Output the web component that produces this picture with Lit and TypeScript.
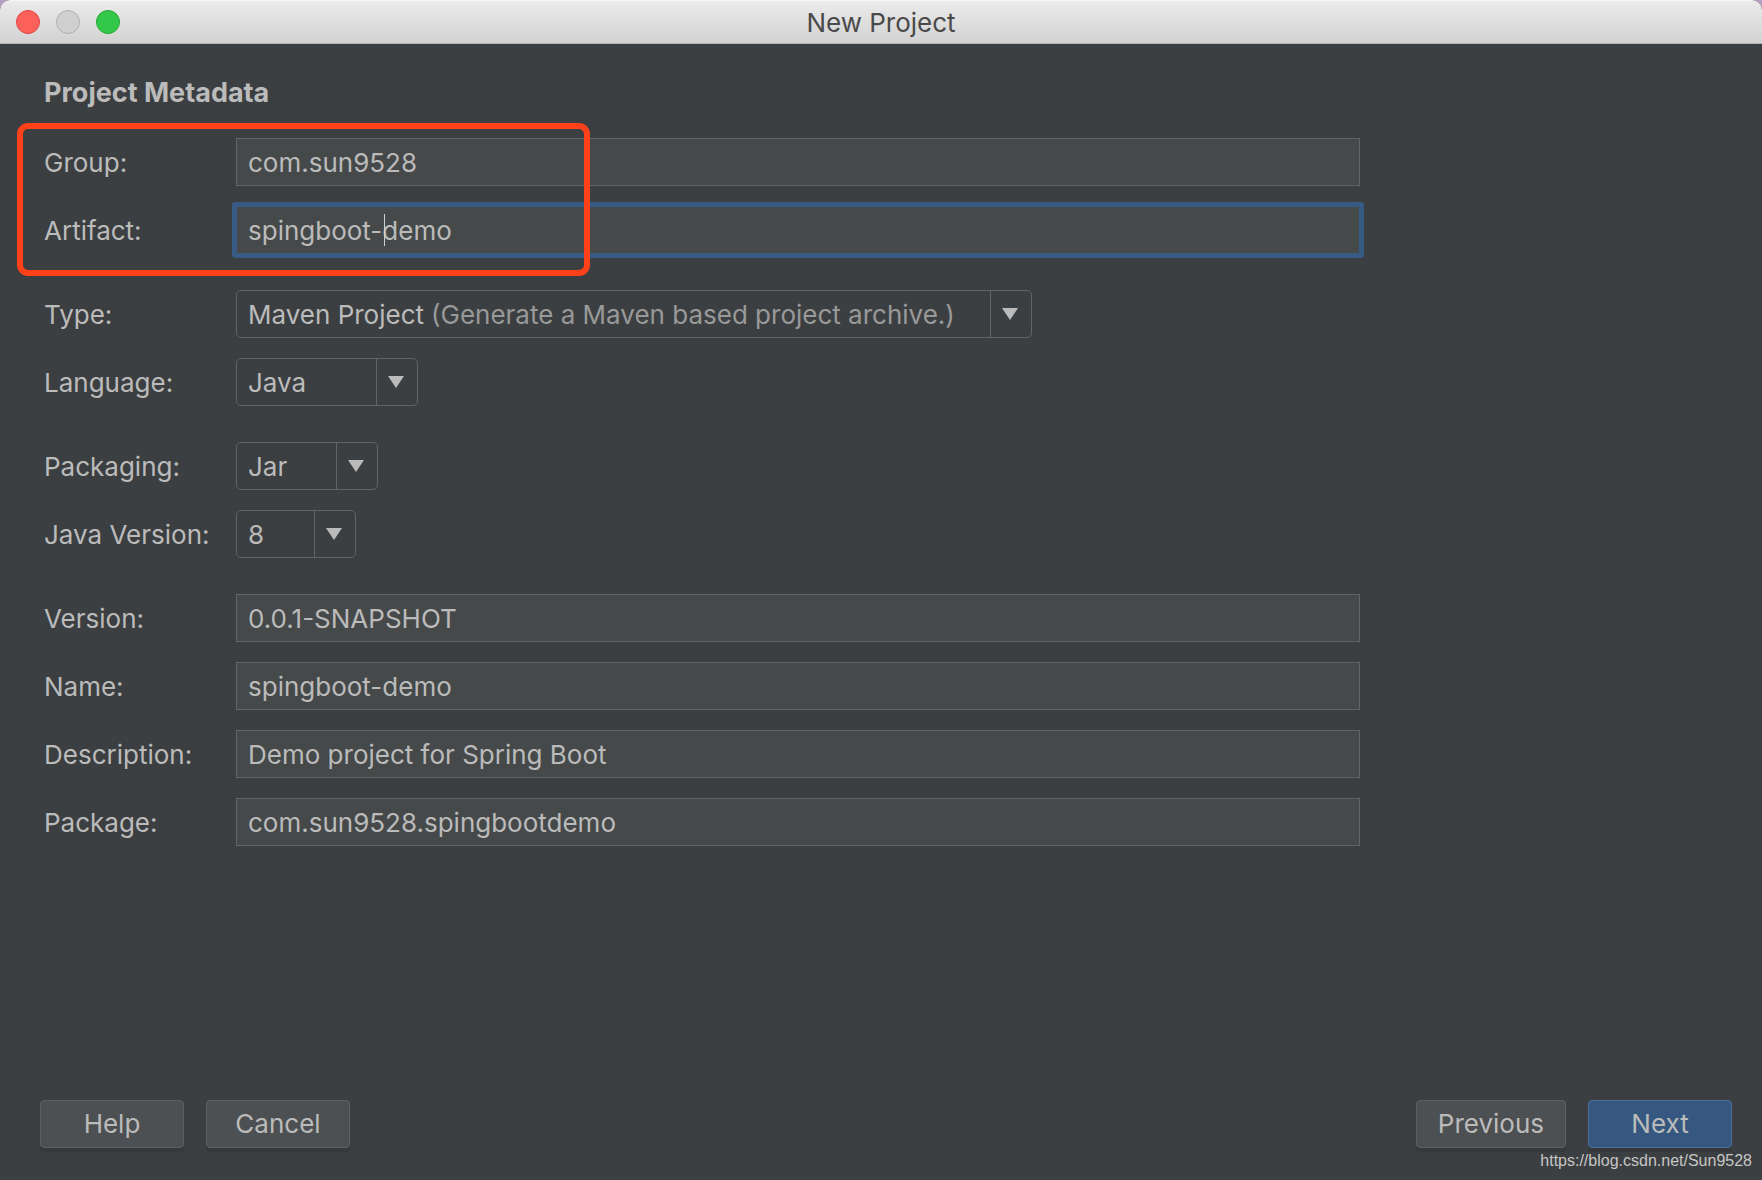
import { LitElement, html, css, nothing } from "lit";
import { customElement } from "lit/decorators.js";
import { classMap } from "lit/directives/class-map.js";

interface Field {
  id: string;
  label: string;
  value: string;
  kind: "text" | "select";
  size?: string;
  hint?: string;
  active?: boolean;
}

const groups: Field[][] = [
  [
    { id: "group", label: "Group:", value: "com.sun9528", kind: "text" },
    { id: "artifact", label: "Artifact:", value: "spingboot-demo", kind: "text", active: true },
  ],
  [
    {
      id: "type",
      label: "Type:",
      value: "Maven Project",
      kind: "select",
      size: "wide",
      hint: "(Generate a Maven based project archive.)",
    },
    { id: "language", label: "Language:", value: "Java", kind: "select", size: "medium" },
  ],
  [
    { id: "packaging", label: "Packaging:", value: "Jar", kind: "select", size: "small" },
    { id: "java-version", label: "Java Version:", value: "8", kind: "select", size: "tiny" },
  ],
  [
    { id: "version", label: "Version:", value: "0.0.1-SNAPSHOT", kind: "text" },
    { id: "name", label: "Name:", value: "spingboot-demo", kind: "text" },
    { id: "description", label: "Description:", value: "Demo project for Spring Boot", kind: "text" },
    { id: "package", label: "Package:", value: "com.sun9528.spingbootdemo", kind: "text" },
  ],
];

@customElement("app-root")
export class AppRoot extends LitElement {
  static styles = css`
    :host {
      display: block;
      background: #b79fc4;
      font-family: Inter, "Liberation Sans", sans-serif;
      font-size: 26px;
      line-height: 32px;
      color: #bbbbbb;
    }
    *,
    *::before,
    *::after {
      box-sizing: border-box;
    }
    .page {
      position: relative;
    }
    .window {
      display: flex;
      flex-direction: column;
      min-height: 100vh;
      background: #3c3f41;
      border-radius: 10px 10px 0 0;
      overflow: hidden;
    }
    .titlebar {
      display: grid;
      grid-template-columns: 1fr auto 1fr;
      align-items: center;
      height: 44px;
      padding: 0 16px;
      background: linear-gradient(#ebebeb, #d2d2d2);
      border-top: 1px solid #f6f6f6;
      border-bottom: 1px solid #b4b4b4;
    }
    .lights {
      display: flex;
      gap: 16px;
    }
    .light {
      width: 24px;
      height: 24px;
      padding: 0;
      border: 1px solid #b0b0b0;
      border-radius: 50%;
      background: #d0d0d0;
    }
    .light.close {
      background: #fc605b;
      border-color: #df4644;
    }
    .light.zoom {
      background: #34c84a;
      border-color: #24a732;
    }
    .title {
      margin: 0;
      padding-top: 2px;
      font-size: 26px;
      font-weight: 400;
      color: #4a4a4a;
    }
    .content {
      flex: 1;
      display: flex;
      flex-direction: column;
      padding: 33px 30px 32px 44px;
    }
    .heading {
      margin: 0 0 29px;
      font-size: 27px;
      font-weight: 700;
    }
    .form {
      display: flex;
      flex-direction: column;
      gap: 36px;
      max-width: 1316px;
    }
    .group {
      position: relative;
      display: flex;
      flex-direction: column;
      gap: 20px;
    }
    .row {
      display: grid;
      grid-template-columns: 192px minmax(0, 1fr);
      align-items: center;
    }
    .label {
      padding-top: 2px;
    }
    .control {
      position: relative;
      display: grid;
      max-width: 100%;
    }
    .control.wide {
      width: 796px;
    }
    .control.medium {
      width: 182px;
    }
    .control.small {
      width: 142px;
    }
    .control.tiny {
      width: 120px;
    }
    .input,
    .select {
      width: 100%;
      height: 48px;
      margin: 0;
      padding: 0 11px;
      border: 1px solid #646464;
      border-radius: 0;
      outline: none;
      font: inherit;
      color: inherit;
      background: #45494a;
    }
    .input.active {
      border-color: #375b85;
      border-radius: 1px;
      box-shadow: 0 0 0 4px #375b85;
    }
    .select {
      appearance: none;
      padding-top: 2px;
      border-radius: 5px;
      background: #3c3f41;
    }
    .arrow {
      position: absolute;
      top: 1px;
      right: 1px;
      bottom: 1px;
      display: flex;
      align-items: center;
      width: 41px;
      padding: 0 0 0 11px;
      border-left: 1px solid #646464;
      pointer-events: none;
    }
    .hint {
      position: absolute;
      top: 9px;
      left: 195px;
      color: #999999;
      white-space: nowrap;
      pointer-events: none;
    }
    .caret {
      position: absolute;
      top: 8px;
      left: 148px;
      width: 1px;
      height: 32px;
      background: #d0d0d0;
    }
    .marker {
      position: absolute;
      top: -15px;
      left: -27px;
      width: 573px;
      height: 153px;
      border: 6px solid #ff4119;
      border-radius: 11px;
      pointer-events: none;
    }
    .actions {
      display: flex;
      gap: 22px;
      margin: auto 0 0 -4px;
      padding-top: 32px;
    }
    .button {
      min-width: 144px;
      height: 48px;
      padding: 0 21px;
      border: 1px solid #5e6060;
      border-radius: 4px;
      background: #4c5052;
      box-shadow: 0 4px 0 #373839;
      font: inherit;
      color: inherit;
    }
    .button.push {
      margin-left: auto;
    }
    .button.primary {
      background: #365880;
      border-color: #4a6f94;
    }
    .watermark {
      position: absolute;
      right: 10px;
      bottom: 9px;
      font: 16px/20px "Liberation Sans", sans-serif;
      color: #c6c6c6;
      text-decoration: none;
    }
  `;

  private renderControl(f: Field) {
    if (f.kind === "text") {
      return html`<div class="control">
        <input
          class=${classMap({ input: true, active: !!f.active })}
          id=${f.id}
          type="text"
          spellcheck="false"
          .value=${f.value}
        />
        ${f.active ? html`<span class="caret"></span>` : nothing}
      </div>`;
    }
    return html`<div class="control ${f.size}">
      <select class="select" id=${f.id}>
        <option>${f.value}</option>
      </select>
      ${f.hint ? html`<span class="hint">${f.hint}</span>` : nothing}
      <span class="arrow">
        <svg width="16" height="12" viewBox="0 0 16 12" aria-hidden="true">
          <path d="M0 0H16L8 12Z" fill="#bbbbbb" />
        </svg>
      </span>
    </div>`;
  }

  render() {
    return html`
      <div class="page">
        <main class="window">
          <header class="titlebar">
            <div class="lights">
              <button class="light close" aria-label="Close"></button>
              <button class="light" aria-label="Minimize" disabled></button>
              <button class="light zoom" aria-label="Zoom"></button>
            </div>
            <h1 class="title">New Project</h1>
          </header>
          <div class="content">
            <h2 class="heading">Project Metadata</h2>
            <form class="form">
              ${groups.map(
                (fields, i) => html`<div class="group">
                  ${fields.map(
                    (f) => html`<div class="row">
                      <label class="label" for=${f.id}>${f.label}</label>
                      ${this.renderControl(f)}
                    </div>`
                  )}
                  ${i === 0 ? html`<div class="marker"></div>` : nothing}
                </div>`
              )}
            </form>
            <footer class="actions">
              <button class="button">Help</button>
              <button class="button">Cancel</button>
              <button class="button push">Previous</button>
              <button class="button primary">Next</button>
            </footer>
          </div>
        </main>
        <a class="watermark" href="https://blog.csdn.net/Sun9528">https://blog.csdn.net/Sun9528</a>
      </div>
    `;
  }
}
